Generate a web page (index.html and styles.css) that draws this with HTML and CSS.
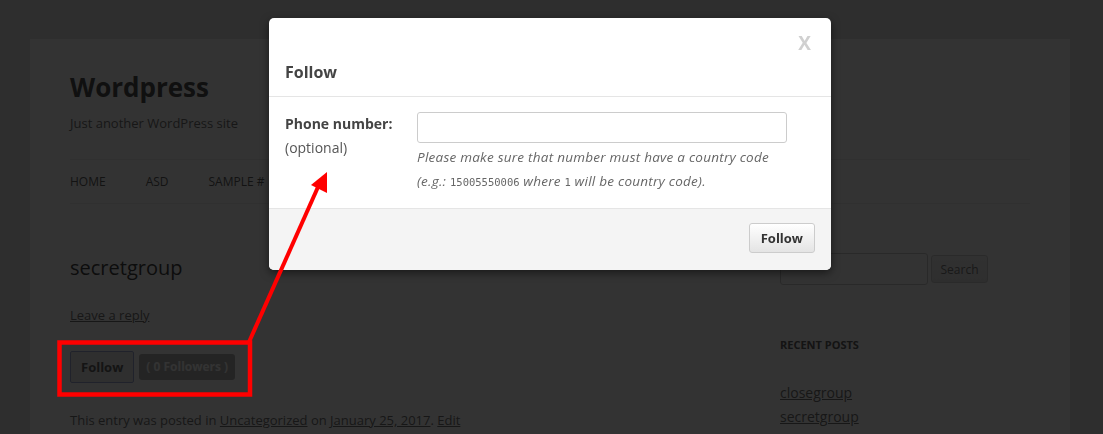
FILE: index.html
```html
<!DOCTYPE html>
<html lang="en">
<head>
    <meta charset="UTF-8">
    <meta name="viewport" content="width=device-width, initial-scale=1.0">
    <title>secretgroup | Wordpress</title>
    <link rel="stylesheet" href="styles.css">
</head>
<body>
    <div class="site">
        <header class="site-header">
            <h1 class="site-title">Wordpress</h1>
            <h2 class="site-description">Just another WordPress site</h2>
            <nav class="main-nav">
                <ul>
                    <li>Home</li>
                    <li>asd</li>
                    <li>Sample #</li>
                </ul>
            </nav>
        </header>

        <div class="site-main">
            <div class="content">
                <h1 class="entry-title">secretgroup</h1>
                <div class="comments-link"><a href="#">Leave a reply</a></div>
                <div class="follow-box">
                    <button class="follow-btn">Follow</button>
                    <span class="followers">( 0 Followers )</span>
                </div>
                <footer class="entry-meta">
                    This entry was posted in <a href="#">Uncategorized</a> on <a href="#">January 25, 2017</a>. <a href="#">Edit</a>
                </footer>
            </div>

            <aside class="sidebar">
                <form class="search-form">
                    <input type="text" class="search-field">
                    <button type="button" class="search-btn">Search</button>
                </form>
                <h3 class="widget-title">Recent Posts</h3>
                <ul class="recent-posts">
                    <li><a href="#">closegroup</a></li>
                    <li><a href="#">secretgroup</a></li>
                </ul>
            </aside>
        </div>
    </div>

    <div class="backdrop"></div>

    <div class="modal">
        <div class="modal-header">
            <span class="close">X</span>
            <h4 class="modal-title">Follow</h4>
        </div>
        <div class="modal-body">
            <div class="field-label">
                <strong>Phone number:</strong>
                <span>(optional)</span>
            </div>
            <div class="field-input">
                <input type="text" class="phone-input">
                <p class="help">Please make sure that number must have a country code<br>(e.g.: <code>15005550006</code> where <code>1</code> will be country code).</p>
            </div>
        </div>
        <div class="modal-footer">
            <button class="modal-btn">Follow</button>
        </div>
    </div>

    <!-- annotation drawn over the screenshot -->
    <svg class="annotation" width="1103" height="434" viewBox="0 0 1103 434">
        <rect x="59.5" y="342.5" width="190.5" height="52" fill="none" stroke="#ff0000" stroke-width="4.5"/>
        <line x1="249" y1="342" x2="318" y2="187" stroke="#ff0000" stroke-width="4"/>
        <polygon points="327,172 311,185 327,193" fill="#ff0000"/>
    </svg>
</body>
</html>
```

FILE: styles.css
```css
* {
    margin: 0;
    padding: 0;
    box-sizing: border-box;
}

body {
    background: #e6e6e6;
    font-family: "Open Sans", Helvetica, Arial, sans-serif;
    font-size: 14px;
    line-height: 24px;
    color: #444;
    overflow: hidden;
}

a {
    color: #757575;
}

/* page behind the modal */
.site {
    width: 1040px;
    min-height: 600px;
    margin: 39px 0 0 30px;
    padding: 0 40px;
    background: #fff;
}

.site-header {
    padding-top: 24px;
}

.site-title {
    font-size: 26px;
    line-height: 48px;
    font-weight: bold;
    color: #515151;
}

.site-description {
    font-size: 13px;
    line-height: 24px;
    font-weight: normal;
    color: #757575;
}

.main-nav {
    margin-top: 24px;
    border-top: 1px solid #ededed;
    border-bottom: 1px solid #ededed;
}

.main-nav ul {
    display: flex;
    gap: 40px;
    list-style: none;
}

.main-nav li {
    font-size: 12px;
    line-height: 43px;
    text-transform: uppercase;
    color: #5e5e5e;
}

.site-main {
    display: grid;
    grid-template-columns: 1fr 250px;
    gap: 60px;
    padding-top: 48px;
}

.entry-title {
    font-size: 20px;
    font-weight: normal;
    line-height: 32px;
    color: #444;
}

.comments-link {
    margin-top: 19px;
    font-size: 13px;
}

.follow-box {
    display: flex;
    align-items: center;
    gap: 5px;
    margin-top: 24px;
}

.follow-btn {
    height: 32px;
    padding: 0 10px;
    font-family: inherit;
    font-size: 13px;
    font-weight: bold;
    color: #666;
    background: #eaeaea;
    border: 1px solid #a0acd8;
    border-radius: 2px;
}

.followers {
    height: 26px;
    padding: 0 7px;
    font-size: 12px;
    font-weight: bold;
    line-height: 26px;
    color: #fff;
    background: #b4b4b4;
    border-radius: 3px;
}

.entry-meta {
    margin-top: 25px;
    font-size: 13px;
    color: #757575;
}

.search-form {
    display: flex;
    align-items: center;
    gap: 3px;
    margin-top: 1px;
}

.search-field {
    width: 148px;
    height: 32px;
    border: 1px solid #ccc;
    border-radius: 3px;
    background: #fff;
}

.search-btn {
    width: 57px;
    height: 28px;
    font-family: inherit;
    font-size: 12px;
    color: #7c7c7c;
    background: linear-gradient(#f4f4f4, #e6e6e6);
    border: 1px solid #d2d2d2;
    border-radius: 3px;
}

.widget-title {
    margin-top: 48px;
    font-size: 11px;
    font-weight: bold;
    line-height: 24px;
    text-transform: uppercase;
    color: #636363;
}

.recent-posts {
    list-style: none;
    margin-top: 24px;
    font-size: 14px;
}

/* dimmed backdrop */
.backdrop {
    position: fixed;
    inset: 0;
    background: rgba(0, 0, 0, 0.8);
}

/* modal */
.modal {
    position: absolute;
    left: 269px;
    top: 18px;
    width: 562px;
    background: #fff;
    border-radius: 5px;
    box-shadow: 0 3px 9px rgba(0, 0, 0, 0.5);
    overflow: hidden;
}

.modal-header {
    padding: 15px 16px 12px;
    border-bottom: 1px solid #e5e5e5;
}

.close {
    display: block;
    text-align: right;
    padding-right: 4px;
    font-size: 19px;
    line-height: 20px;
    font-weight: bold;
    color: #d0d0d0;
}

.modal-title {
    margin-top: 7px;
    font-size: 16px;
    line-height: 24px;
    color: #444;
}

.modal-body {
    display: flex;
    padding: 15px 16px 14px;
}

.field-label {
    display: flex;
    flex-direction: column;
    width: 132px;
    color: #444;
}

.field-label span {
    color: #555;
}

.field-input {
    width: 370px;
}

.phone-input {
    display: block;
    width: 370px;
    height: 31px;
    border: 1px solid #ccc;
    border-radius: 3px;
    margin-bottom: 2px;
}

.help {
    font-size: 13.5px;
    line-height: 24px;
    font-style: italic;
    letter-spacing: 0.25px;
    color: #666;
    white-space: nowrap;
}

.help code {
    font-family: "DejaVu Sans Mono", monospace;
    font-size: 10.5px;
    font-style: normal;
    letter-spacing: 0;
}

.modal-footer {
    display: flex;
    justify-content: flex-end;
    padding: 14px 16px 17px;
    background: #f4f4f4;
    border-top: 1px solid #e5e5e5;
}

.modal-btn {
    height: 30px;
    padding: 0 11px;
    font-family: inherit;
    font-size: 13px;
    font-weight: bold;
    color: #333;
    background: linear-gradient(#fff, #e4e4e4);
    border: 1px solid #ccc;
    border-radius: 3px;
}

.annotation {
    position: absolute;
    left: 0;
    top: 0;
}
```
